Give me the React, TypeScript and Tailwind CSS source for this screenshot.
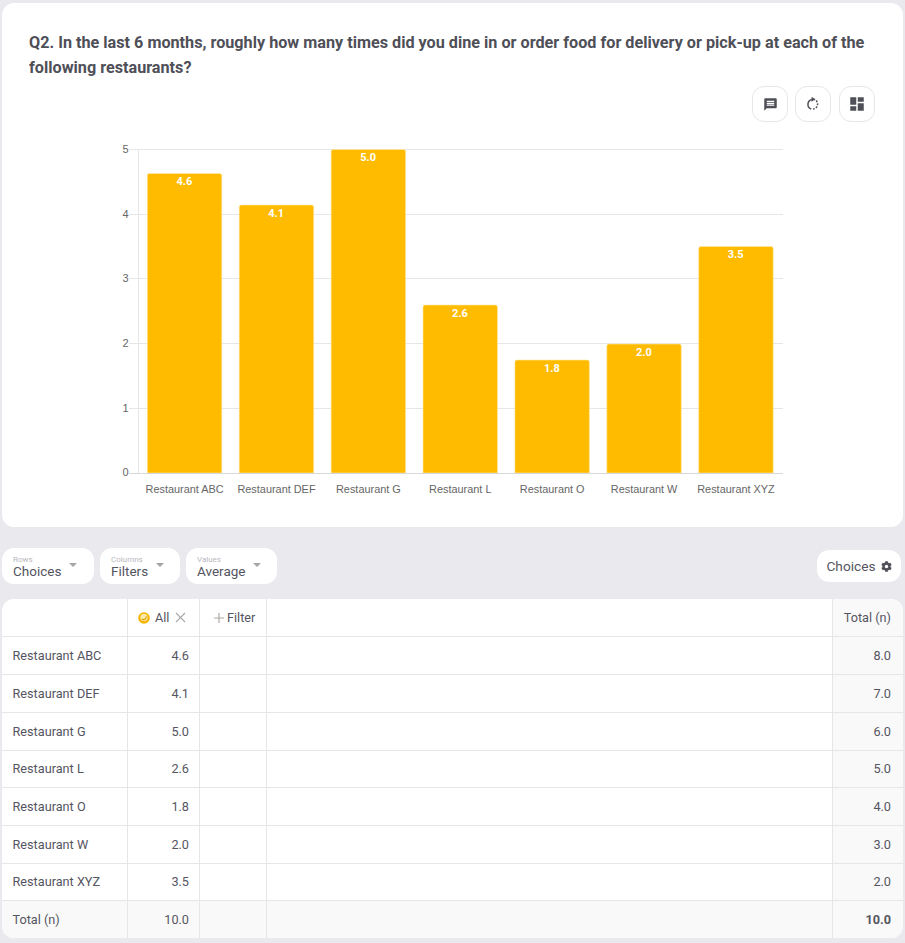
import React from "react";
import { MdMessage, MdDashboard } from "react-icons/md";
import { FaCog } from "react-icons/fa";

const chartLabels = ["Restaurant ABC", "Restaurant DEF", "Restaurant G", "Restaurant L", "Restaurant O", "Restaurant W", "Restaurant XYZ"];
const bars = [
  { v: "4.6", top: 173.5 },
  { v: "4.1", top: 205 },
  { v: "5.0", top: 149.5 },
  { v: "2.6", top: 305 },
  { v: "1.8", top: 360 },
  { v: "2.0", top: 344 },
  { v: "3.5", top: 246.5 },
];
const grid = [
  { l: "5", y: 149.5 },
  { l: "4", y: 214.5 },
  { l: "3", y: 278.5 },
  { l: "2", y: 343.5 },
  { l: "1", y: 408.5 },
];

const OX = 2;
const OY = 130;

function Chart() {
  return (
    <svg width={901} height={370} viewBox={`${OX} ${OY} 901 370`} className="block" style={{ fontFamily: '"Liberation Sans", Arial, sans-serif' }}>
      {grid.map((g) => (
        <g key={g.l}>
          <line x1={129} x2={783} y1={g.y} y2={g.y} stroke="#e6e6e6" />
          <text x={128.5} y={g.y + 3} textAnchor="end" fontSize={11} fill="#666">{g.l}</text>
        </g>
      ))}
      <line x1={138.5} x2={138.5} y1={149} y2={473} stroke="#e6e6e6" />
      {bars.map((b, i) => {
        const x = 147.3 + i * 91.9;
        return (
          <g key={b.v}>
            <path
              d={`M${x} 473V${b.top + 2}Q${x} ${b.top} ${x + 2} ${b.top}H${x + 72.5}Q${x + 74.5} ${b.top} ${x + 74.5} ${b.top + 2}V473Z`}
              fill="#ffbb00"
              stroke="#ffe9a8"
              strokeWidth={0.6}
            />
            <text x={x + 37} y={b.top + 11.5} textAnchor="middle" fontSize={11} fontWeight={700} fill="#fff" style={{ fontFamily: "Roboto, sans-serif" }}>{b.v}</text>
            <text x={x + 37.3} y={493} textAnchor="middle" fontSize={10.9} fill="#666">{chartLabels[i]}</text>
          </g>
        );
      })}
      <line x1={129} x2={783} y1={473.5} y2={473.5} stroke="#d8d8d8" />
      <text x={128.5} y={476} textAnchor="end" fontSize={11} fill="#666">0</text>
    </svg>
  );
}

function IconButton({ children }: { children: React.ReactNode }) {
  return (
    <button className="w-9 h-9 flex items-center justify-center rounded-xl border border-[#e6e6e6] bg-white text-[#4f4f58]">
      {children}
    </button>
  );
}

function Dropdown({ label, value, w }: { label: string; value: string; w: string }) {
  return (
    <div className={`${w} h-[36px] rounded-xl bg-white flex items-start pl-[11px] pt-[8px]`}>
      <div className="flex flex-col">
        <div className="text-[8px] leading-[8px] text-[#b9b9c0]">{label}</div>
        <div className="text-[13.5px] leading-[14px] text-[#55555f]">{value}</div>
      </div>
      <div className="ml-[8px] mt-[7px] w-0 h-0 border-x-[4.5px] border-x-transparent border-t-[4px] border-t-[#a5a5a8]" />
    </div>
  );
}

const rows: [string, string, string, string][] = [
  ["Restaurant ABC", "4.6", "8.0", "h-[38px]"],
  ["Restaurant DEF", "4.1", "7.0", "h-[38px]"],
  ["Restaurant G", "5.0", "6.0", "h-[38px]"],
  ["Restaurant L", "2.6", "5.0", "h-[37px]"],
  ["Restaurant O", "1.8", "4.0", "h-[38px]"],
  ["Restaurant W", "2.0", "3.0", "h-[38px]"],
  ["Restaurant XYZ", "3.5", "2.0", "h-[37px]"],
];

const cols = "grid grid-cols-[126px_72px_67px_566px_70px]";

function Row({ name, val, total, h }: { name: string; val: string; total: string; h: string }) {
  return (
    <div className={`${cols} ${h} border-b border-[#e6e6e6] text-[12.7px] text-[#55555f]`}>
      <div className="flex items-center pl-[10.5px] border-r border-[#e6e6e6]">{name}</div>
      <div className="flex items-center justify-end pr-[10px] border-r border-[#e6e6e6]">{val}</div>
      <div className="border-r border-[#e6e6e6]" />
      <div className="border-r border-[#e6e6e6]" />
      <div className="flex items-center justify-end pr-[12px] bg-[#f9f9f9]">{total}</div>
    </div>
  );
}

export default function App() {
  return (
    <div className="w-[905px] h-[943px] bg-[#e9e9ee] pt-[3px] px-[2px] overflow-hidden" style={{ fontFamily: "Roboto, sans-serif" }}>
      <div className="w-[901px] h-[524px] bg-white rounded-xl">
        <div className="pl-[27px] pr-[30px] pt-[27px] text-[16.2px] leading-[25px] font-bold text-[#4f4f58]">
          Q2. In the last 6 months, roughly how many times did you dine in or order food for delivery or pick-up at each of the following restaurants?
        </div>
        <div className="flex justify-end gap-[7px] pr-[28px] mt-[6px] h-[36px]">
          <IconButton><MdMessage size={15} /></IconButton>
          <IconButton>
            <svg width="16" height="16" viewBox="0 0 16 16" fill="none" stroke="#4f4f58" strokeWidth="1.5">
              <path d="M7 3.4A5 5 0 0 0 6.2 13" />
              <path d="M8 13.1A5 5 0 0 0 8.5 3.2" strokeDasharray="1.8 1.3" />
              <path d="M6.6 0.8L6.6 5.8L10.2 3.3Z" fill="#4f4f58" stroke="none" />
            </svg>
          </IconButton>
          <div className="ml-[1px]">
            <IconButton><span className="mr-[1px] flex"><MdDashboard size={18} /></span></IconButton>
          </div>
        </div>
        <div className="mt-[8px]"><Chart /></div>
      </div>

      <div className="flex items-center mt-[21px] h-[36px]">
        <div className="flex gap-[6px]">
          <Dropdown label="Rows" value="Choices" w="w-[92px]" />
          <Dropdown label="Columns" value="Filters" w="w-[80px]" />
          <Dropdown label="Values" value="Average" w="w-[91px]" />
        </div>
        <div className="ml-auto mr-[2px] w-[84px] h-[32px] rounded-xl bg-white flex items-center justify-center gap-[5px] text-[13.7px] text-[#55555f]">
          Choices <FaCog size={11} className="text-[#4f4f58]" />
        </div>
      </div>

      <div className="mt-[15px] w-[901px] bg-white rounded-xl overflow-hidden">
        <div className={`${cols} h-[38px] border-b border-[#e6e6e6] text-[12.7px] text-[#55555f]`}>
          <div className="border-r border-[#e6e6e6]" />
          <div className="flex items-center pl-[10px] gap-[5px] border-r border-[#e6e6e6]">
            <svg width="12" height="12" viewBox="0 0 12 12" className="shrink-0">
              <circle cx="6" cy="6" r="5.8" fill="#f5b400" />
              <circle cx="6" cy="5.4" r="3.6" fill="#fde9a8" />
              <path d="M3.8 6.8A2.6 2.6 0 0 0 8.2 4.4" stroke="#e09a00" strokeWidth="1.1" fill="none" />
            </svg>
            <span>All</span>
            <svg width="11" height="11" viewBox="0 0 11 11" className="ml-[1px]" stroke="#a8a8ac" strokeWidth="1.1">
              <path d="M1 1L10 10M10 1L1 10" />
            </svg>
          </div>
          <div className="flex items-center pl-[14px] gap-[3px] border-r border-[#e6e6e6]">
            <svg width="10" height="10" viewBox="0 0 10 10" stroke="#b0aca4" strokeWidth="1.2">
              <path d="M5 0V10M0 5H10" />
            </svg>
            <span>Filter</span>
          </div>
          <div className="border-r border-[#e6e6e6]" />
          <div className="flex items-center justify-end pr-[12px] bg-[#f9f9f9]">Total (n)</div>
        </div>
        {rows.map((r) => (
          <Row key={r[0]} name={r[0]} val={r[1]} total={r[2]} h={r[3]} />
        ))}
        <div className={`${cols} h-[37px] bg-[#f9f9f9] text-[12.7px] text-[#55555f]`}>
          <div className="flex items-center pl-[10.5px] border-r border-[#e6e6e6]">Total (n)</div>
          <div className="flex items-center justify-end pr-[10px] border-r border-[#e6e6e6]">10.0</div>
          <div className="border-r border-[#e6e6e6]" />
          <div className="border-r border-[#e6e6e6]" />
          <div className="flex items-center justify-end pr-[12px] font-bold">10.0</div>
        </div>
      </div>
    </div>
  );
}
